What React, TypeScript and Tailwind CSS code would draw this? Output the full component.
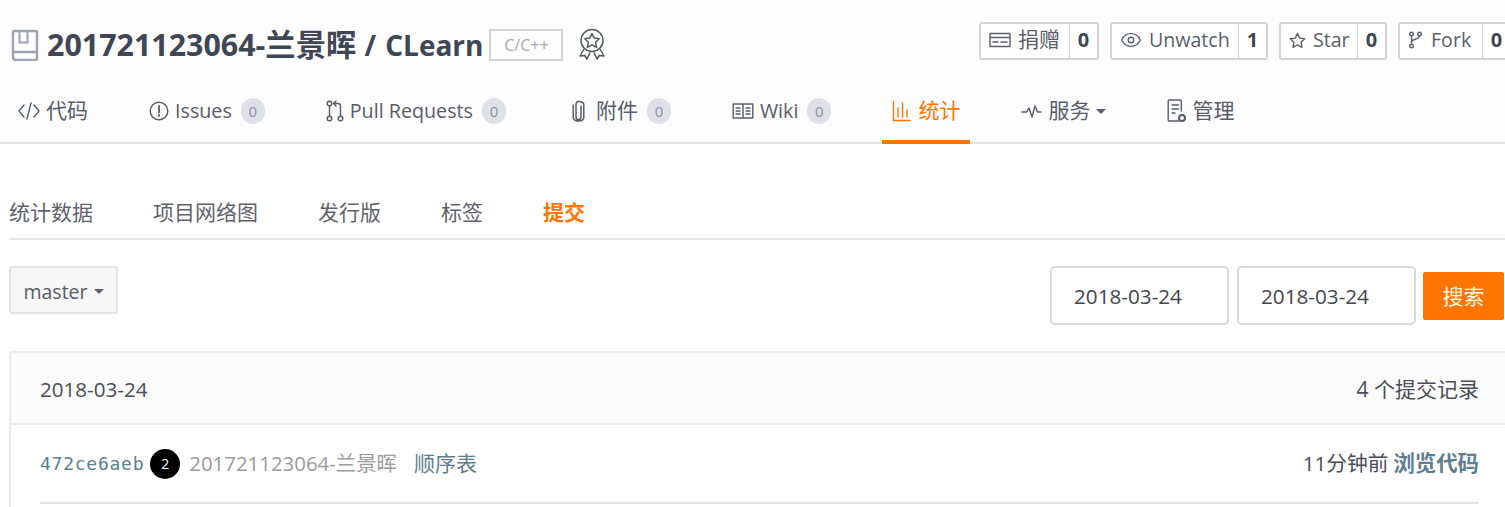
import React from "react";
import { Eye } from "lucide-react";

const font = "font-['Open_Sans','Noto_Sans_CJK_SC',sans-serif]";

const RepoIcon = () => (
  <svg width="28" height="32" viewBox="0 0 28 32" fill="none" stroke="#9ea3b0" strokeWidth="2.4">
    <path d="M2 25V3.2C2 2.5 2.5 2 3.2 2h21.6c.7 0 1.2.5 1.2 1.2v26.6c0 .7-.5 1.2-1.2 1.2H5c-1.7 0-3-1.3-3-3v-3c0-1.2 1-2 2.2-2H26" />
    <path d="M8.5 2v11.5h8V2" strokeWidth="2" />
  </svg>
);

const BadgeIcon = () => (
  <svg width="28" height="32" viewBox="0 0 28 32" fill="none" stroke="#55595f" strokeWidth="1.5" strokeLinejoin="round">
    <circle cx="14" cy="12.5" r="11" />
    <path d="M14 5.5l2.2 4.6 5 .7-3.6 3.5.9 5-4.5-2.4-4.5 2.4.9-5-3.6-3.5 5-.7z" />
    <path d="M6 21L2 28l4.8-.5L9 31l3-6.5M22 21l4 7-4.8-.5L19 31l-3-6.5" />
  </svg>
);

const Line = ({ w, h, children }: { w: number; h: number; children: React.ReactNode }) => (
  <svg width={w} height={h} viewBox={`0 0 ${w} ${h}`} fill="none" stroke="currentColor" strokeWidth="1.4" strokeLinecap="round" strokeLinejoin="round">
    {children}
  </svg>
);

const CodeIcon = () => (
  <Line w={22} h={20}><path d="M6 4L1 10l5 6M16 4l5 6-5 6M13 2L9 18" /></Line>
);
const IssueIcon = () => (
  <Line w={20} h={20}><circle cx="10" cy="10" r="8.8" /><path d="M10 5v6.5M10 14v1" strokeWidth="1.8" /></Line>
);
const PullIcon = () => (
  <Line w={18} h={22}>
    <circle cx="3.5" cy="3.5" r="2.3" /><circle cx="3.5" cy="18.5" r="2.3" /><circle cx="14.5" cy="18.5" r="2.3" />
    <path d="M3.5 6v10M14.5 16V6c0-1.5-1-2.5-2.5-2.5H8M10 1L7.5 3.5 10 6" />
  </Line>
);
const ClipIcon = () => (
  <span className="ml-[5px] mr-[5px] flex">
    <Line w={13} h={22}><path d="M9 6v11c0 1.6-1.1 2.6-2.5 2.6S4 18.600 4 17V4.500C4 2.600 5.100 1.400 6.800 1.400S11.800 2.600 11.800 4.500V17c0 2.800-2.300 4-5.300 4S1.200 19.800 1.200 17V5" strokeWidth="1.5" /></Line>
  </span>
);
const WikiIcon = () => (
  <Line w={22} h={18}><path d="M1.200 2h19.600v14H1.200zM11 2v14M4 6h4M4 9h4M4 12h4M14 6h4M14 9h4M14 12h4" /></Line>
);
const StatsIcon = () => (
  <span className="mr-px flex">
    <Line w={19} h={22}><path d="M1.500 1.500v19h16.500M6 8v9M10.500 3v14M15 10v7" /></Line>
  </span>
);
const PulseIcon = () => (
  <Line w={21} h={18}><path d="M1 10h4.500l2.500-4 3 9 3-11 2.500 6H20" /></Line>
);
const ManageIcon = () => (
  <Line w={19} h={25}>
    <path d="M12 22H2.500c-.800 0-1.300-.500-1.300-1.300V2.300C1.200 1.500 1.700 1 2.500 1h10.500c.800 0 1.300.500 1.300 1.300V12M5 6h6.500M5 10h6.500M5 14h3" />
    <circle cx="15" cy="19" r="3" strokeWidth="2" />
  </Line>
);
const CardIcon = () => (
  <Line w={22} h={16}><path d="M1 1.500h20v13H1zM1 5.500h20M4 10h5M12 10h6" /></Line>
);
const StarIcon = () => (
  <Line w={17} h={17}><path d="M8.500 1.500l2.200 4.600 5 .7-3.600 3.500.9 5-4.500-2.400-4.500 2.400.9-5L1.300 6.800l5-.7z" /></Line>
);
const ForkIcon = () => (
  <span className="mr-[2px] flex pl-px">
    <Line w={13} h={18}><circle cx="2.500" cy="3" r="1.800" /><circle cx="10.500" cy="3" r="1.800" /><circle cx="2.500" cy="15" r="1.800" /><path d="M2.500 5v8M10.500 5c0 3.500-8 3-8 6" /></Line>
  </span>
);

const Count = ({ n }: { n: number }) => (
  <span className="ml-[9px] flex h-[26px] w-[24px] items-center justify-center rounded-full bg-[#dfe1e8] text-[15px] text-[#8a8f9c]">{n}</span>
);

const CountButton = ({ icon, label, n, cls, labelCls }: { icon: React.ReactNode; label: string; n: number; cls: string; labelCls?: string }) => (
  <div className={`flex h-[38px] items-stretch rounded-[3px] border-2 border-[#d4d4d8] bg-white ${cls}`}>
    <div className={`flex flex-1 items-center gap-[7px] whitespace-nowrap pb-[2px] pl-2 text-[#5a5f69] ${labelCls ?? "text-[19.6px]"}`}>
      {icon}
      <span>{label}</span>
    </div>
    <div className="flex w-[28px] items-center justify-center border-l border-[#d4d4d8] pb-[2px] text-[20px] font-bold text-[#3f4654]">{n}</div>
  </div>
);

const NavItem = ({ icon, label, n, active, cjk, children }: { icon: React.ReactNode; label: string; n?: number; active?: boolean; cjk?: boolean; children?: React.ReactNode }) => (
  <div className={`flex h-full items-center whitespace-nowrap px-[10px] ${cjk ? "text-[21px]" : "text-[19.7px]"} ${active ? "border-b-[4px] border-[#ff7500] pb-[8px] text-[#ff7500]" : "pb-[12px] text-[#585c66]"}`}>
    {icon}
    <span className="ml-[6px]">{label}</span>
    {n !== undefined && <Count n={n} />}
    {children}
  </div>
);

export default function App() {
  return (
    <div className={`h-[507px] w-[1505px] overflow-hidden bg-white ${font}`}>
      <div className="border-b-2 border-[#e3e3e5] bg-[#fdfdfd]">
        <div className="flex h-[90px] items-center pl-[11px]">
          <RepoIcon />
          <h1 className="ml-[8px] whitespace-nowrap text-[30.4px] font-bold text-[#3f4654]">201721123064-兰景晖 <span className="text-[28px] [word-spacing:2px]">/ CLearn</span></h1>
          <span className="ml-[6px] flex h-[32px] w-[74px] items-center justify-center border-2 border-[#d4d4d8] text-[16px] text-[#a4a8b0]">C/C++</span>
          <span className="mb-[2px] ml-[15px] flex"><BadgeIcon /></span>
          <div className="mb-[8px] ml-auto mr-[-7px] flex gap-[11px]">
            <CountButton cls="w-[120px]" labelCls="text-[21px]" label="捐赠" n={0} icon={<CardIcon />} />
            <CountButton cls="w-[158px]" label="Unwatch" n={1} icon={<Eye size={22} strokeWidth={1.5} />} />
            <CountButton cls="w-[108px]" label="Star" n={0} icon={<StarIcon />} />
            <CountButton cls="w-[114px]" label="Fork" n={0} icon={<ForkIcon />} />
          </div>
        </div>
        <nav className="-mb-[2px] flex h-[54px] items-stretch gap-[41px] pl-[8px]">
          <NavItem cjk label="代码" icon={<CodeIcon />} />
          <NavItem label="Issues" n={0} icon={<IssueIcon />} />
          <NavItem label="Pull Requests" n={0} icon={<PullIcon />} />
          <NavItem cjk label="附件" n={0} icon={<ClipIcon />} />
          <NavItem label="Wiki" n={0} icon={<WikiIcon />} />
          <NavItem cjk active label="统计" icon={<StatsIcon />} />
          <NavItem cjk label="服务" icon={<PulseIcon />}>
            <span className="ml-[6px] h-0 w-0 border-x-[5px] border-t-[5px] border-x-transparent border-t-[#585c66]" />
          </NavItem>
          <NavItem cjk label="管理" icon={<ManageIcon />} />
        </nav>
      </div>

      <div className="pl-[9px] pt-[48px]">
        <div className="flex h-[48px] items-center gap-[60px] border-b-2 border-[#e8e8ea] pb-[5px] text-[21px] text-[#5f6369]">
          <span>统计数据</span>
          <span>项目网络图</span>
          <span>发行版</span>
          <span>标签</span>
          <span className="font-bold text-[#ff7500]">提交</span>
        </div>
        <div className="mt-[26px] flex items-start justify-between pr-px">
          <div className="flex h-[48px] w-[109px] items-center justify-center gap-[6px] rounded-[3px] border-2 border-[#e3e3e5] bg-[#f7f7f7] pt-[3px] text-[19.5px] text-[#585c66]">
            master
            <span className="h-0 w-0 border-x-[5px] border-t-[5px] border-x-transparent border-t-[#5f6070]" />
          </div>
          <div className="flex items-center gap-[8px]">
            <div className="flex h-[59px] w-[179px] items-center rounded-[5px] border-2 border-[#d9d9dc] pl-[22px] pt-[3px] text-[20.7px] text-[#43464c]">2018-03-24</div>
            <div className="flex h-[59px] w-[179px] items-center rounded-[5px] border-2 border-[#d9d9dc] pl-[22px] pt-[3px] text-[20.7px] text-[#43464c]">2018-03-24</div>
            <div className="-ml-px flex h-[48px] w-[81px] items-center justify-center rounded-[2px] bg-[#ff7500] pt-[2px] text-[21px] text-[#fff5e6]">搜索</div>
          </div>
        </div>
        <div className="mt-[26px] rounded-tl-[3px] border-l-2 border-t-2 border-[#ececee]">
          <div className="flex h-[72px] items-center justify-between border-b-2 border-[#ececee] bg-[#fbfbfb] pl-[29px] pr-[26px] pt-[3px] text-[20.6px] text-[#4a4d55]">
            <span>2018-03-24</span>
            <span className="text-[21px]">4 个提交记录</span>
          </div>
          <div className="ml-[29px] mr-[26px] flex h-[79px] items-center justify-between border-b-2 border-[#e3e3e5] text-[20.4px]">
            <div className="flex items-center">
              <span className="font-['DejaVu_Sans_Mono',monospace] text-[18px] tracking-[0.75px] text-[#5b8090]">472ce6aeb</span>
              <span className="ml-[6px] flex h-[30px] w-[30px] items-center justify-center rounded-full bg-black text-[14px] text-white">2</span>
              <span className="ml-[9px] text-[#9a9a9a]">201721123064-兰景晖</span>
              <span className="ml-[17px] text-[21px] text-[#5d7d90]">顺序表</span>
            </div>
            <div className="flex items-center">
              <span className="text-[20.7px] text-[#4a4d55]">11分钟前</span>
              <span className="ml-[5px] text-[21.4px] font-bold text-[#5d7d90]">浏览代码</span>
            </div>
          </div>
          <div className="h-[20px]" />
        </div>
      </div>
    </div>
  );
}
